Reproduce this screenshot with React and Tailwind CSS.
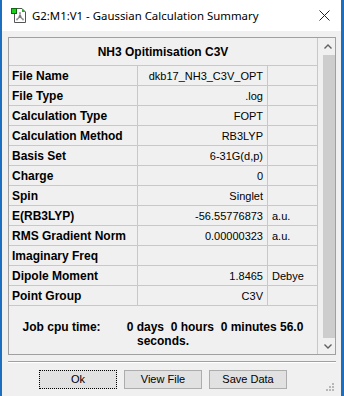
import React from "react";

const rows = [
  { label: "File Name", value: "dkb17_NH3_C3V_OPT", unit: "" },
  { label: "File Type", value: ".log", unit: "" },
  { label: "Calculation Type", value: "FOPT", unit: "" },
  { label: "Calculation Method", value: "RB3LYP", unit: "" },
  { label: "Basis Set", value: "6-31G(d,p)", unit: "" },
  { label: "Charge", value: "0", unit: "" },
  { label: "Spin", value: "Singlet", unit: "" },
  { label: "E(RB3LYP)", value: "-56.55776873", unit: "a.u." },
  { label: "RMS Gradient Norm", value: "0.00000323", unit: "a.u." },
  { label: "Imaginary Freq", value: "", unit: "" },
  { label: "Dipole Moment", value: "1.8465", unit: "Debye" },
  { label: "Point Group", value: "C3V", unit: "" },
];

function AppIcon() {
  return (
    <svg width="15" height="15" viewBox="0 0 15 15">
      <path d="M3.5 0.5 H11 L14.5 4 V14.5 H3.5 Z" fill="#fff" stroke="#555" />
      <path d="M11 0.5 L14.5 4 H11 Z" fill="#22b022" />
      <line x1="9" y1="5" x2="9" y2="8.5" stroke="#888" strokeWidth="1.2" />
      <line x1="9" y1="8.5" x2="6" y2="11.5" stroke="#888" strokeWidth="1.2" />
      <line x1="9" y1="8.5" x2="12" y2="11.5" stroke="#888" strokeWidth="1.2" />
      <circle cx="9" cy="8.5" r="1.4" fill="#777" />
      <circle cx="9" cy="5" r="1" fill="#999" />
      <circle cx="6" cy="11.5" r="1" fill="#999" />
      <circle cx="12" cy="11.5" r="1" fill="#999" />
      <rect x="0.5" y="0.5" width="5" height="5" fill="#18d018" stroke="#116611" />
    </svg>
  );
}

function Chevron({ down }) {
  return (
    <svg width="8" height="5" viewBox="0 0 8 5">
      <path
        d={down ? "M0.5 0.5 L4 4 L7.5 0.5" : "M0.5 4.5 L4 1 L7.5 4.5"}
        fill="none"
        stroke="#606060"
        strokeWidth="1.4"
      />
    </svg>
  );
}

function Button({ children, focused }) {
  return (
    <div
      className={`w-[78px] h-[19px] flex items-center justify-center bg-[#e1e1e1] border ${
        focused ? "border-dotted border-black" : "border-[#adadad]"
      } text-[11px] text-black`}
    >
      {children}
    </div>
  );
}

export default function App() {
  return (
    <div className="relative w-[344px] h-[396px] bg-[#f0f0f0] border-l-2 border-r-[3px] border-[#1c6fc0] overflow-hidden font-['Liberation_Sans',Arial,sans-serif]">
      {/* Title bar */}
      <div className="h-[31px] bg-white flex items-center pl-[9px] pr-[11px]">
        <AppIcon />
        <span className="ml-[6px] text-[11.4px] text-black font-['Noto_Sans',sans-serif]">
          G2:M1:V1 - Gaussian Calculation Summary
        </span>
        <div className="flex-1" />
        <svg width="11" height="11" viewBox="0 0 11 11">
          <path d="M0.5 0.5 L10.5 10.5 M10.5 0.5 L0.5 10.5" stroke="#222" strokeWidth="1" />
        </svg>
      </div>

      {/* Summary panel */}
      <div className="ml-[6px] mt-[6px] w-[328px] h-[318px] border border-[#a0a0a0] flex">
        <div className="w-[309px] border-r border-[#c8c8c8] flex flex-col">
          <div className="h-[28px] border-b border-[#c8c8c8] flex items-center justify-center text-[12px] font-bold text-black pt-[1px]">
            NH3 Opitimisation C3V
          </div>
          {rows.map((r) => (
            <div key={r.label} className="h-[20px] border-b border-[#c8c8c8] flex text-black">
              <div className="w-[129px] border-r border-[#c8c8c8] pl-[3px] flex items-center text-[12px] font-bold pt-[1px]">
                {r.label}
              </div>
              <div className="w-[130px] border-r border-[#c8c8c8] pr-[4px] flex items-center justify-end text-[11px] pt-[1px]">
                {r.value}
              </div>
              <div className="flex-1 pl-[4px] flex items-center text-[11px] pt-[1px]">{r.unit}</div>
            </div>
          ))}
          <div className="pt-[14px] text-[12px] font-bold text-black leading-[14px] text-center">
            <div className="flex justify-center whitespace-pre">
              <span>Job cpu time:</span>
              <span className="ml-[26px]">0 days  0 hours  0 minutes 56.0</span>
            </div>
            <div>seconds.</div>
          </div>
        </div>

        {/* Scrollbar */}
        <div className="flex-1 flex flex-col items-center">
          <div className="h-[17px] flex items-center justify-center pl-[2px]">
            <Chevron />
          </div>
          <div className="ml-[5px] w-[12px] h-[283px] bg-[#cdcdcd]" />
          <div className="flex-1 flex items-center justify-center pl-[2px]">
            <Chevron down />
          </div>
        </div>
      </div>

      {/* Separator */}
      <div className="ml-[6px] mt-[6px] w-[328px] h-[2px] border-t border-[#a0a0a0] border-b border-b-white" />

      {/* Buttons */}
      <div className="mt-[7px] pl-[37px] flex gap-[7px]">
        <Button focused>Ok</Button>
        <Button>View File</Button>
        <Button>Save Data</Button>
      </div>

      {/* Size grip */}
      <svg className="absolute left-[323px] top-[383px]" width="10" height="10" viewBox="0 0 10 10">
        <rect x="7" y="0" width="2" height="2" fill="#b8b8b8" />
        <rect x="4" y="3" width="2" height="2" fill="#b8b8b8" />
        <rect x="7" y="3" width="2" height="2" fill="#b8b8b8" />
        <rect x="1" y="6" width="2" height="2" fill="#b8b8b8" />
        <rect x="4" y="6" width="2" height="2" fill="#b8b8b8" />
        <rect x="7" y="6" width="2" height="2" fill="#b8b8b8" />
      </svg>
    </div>
  );
}
